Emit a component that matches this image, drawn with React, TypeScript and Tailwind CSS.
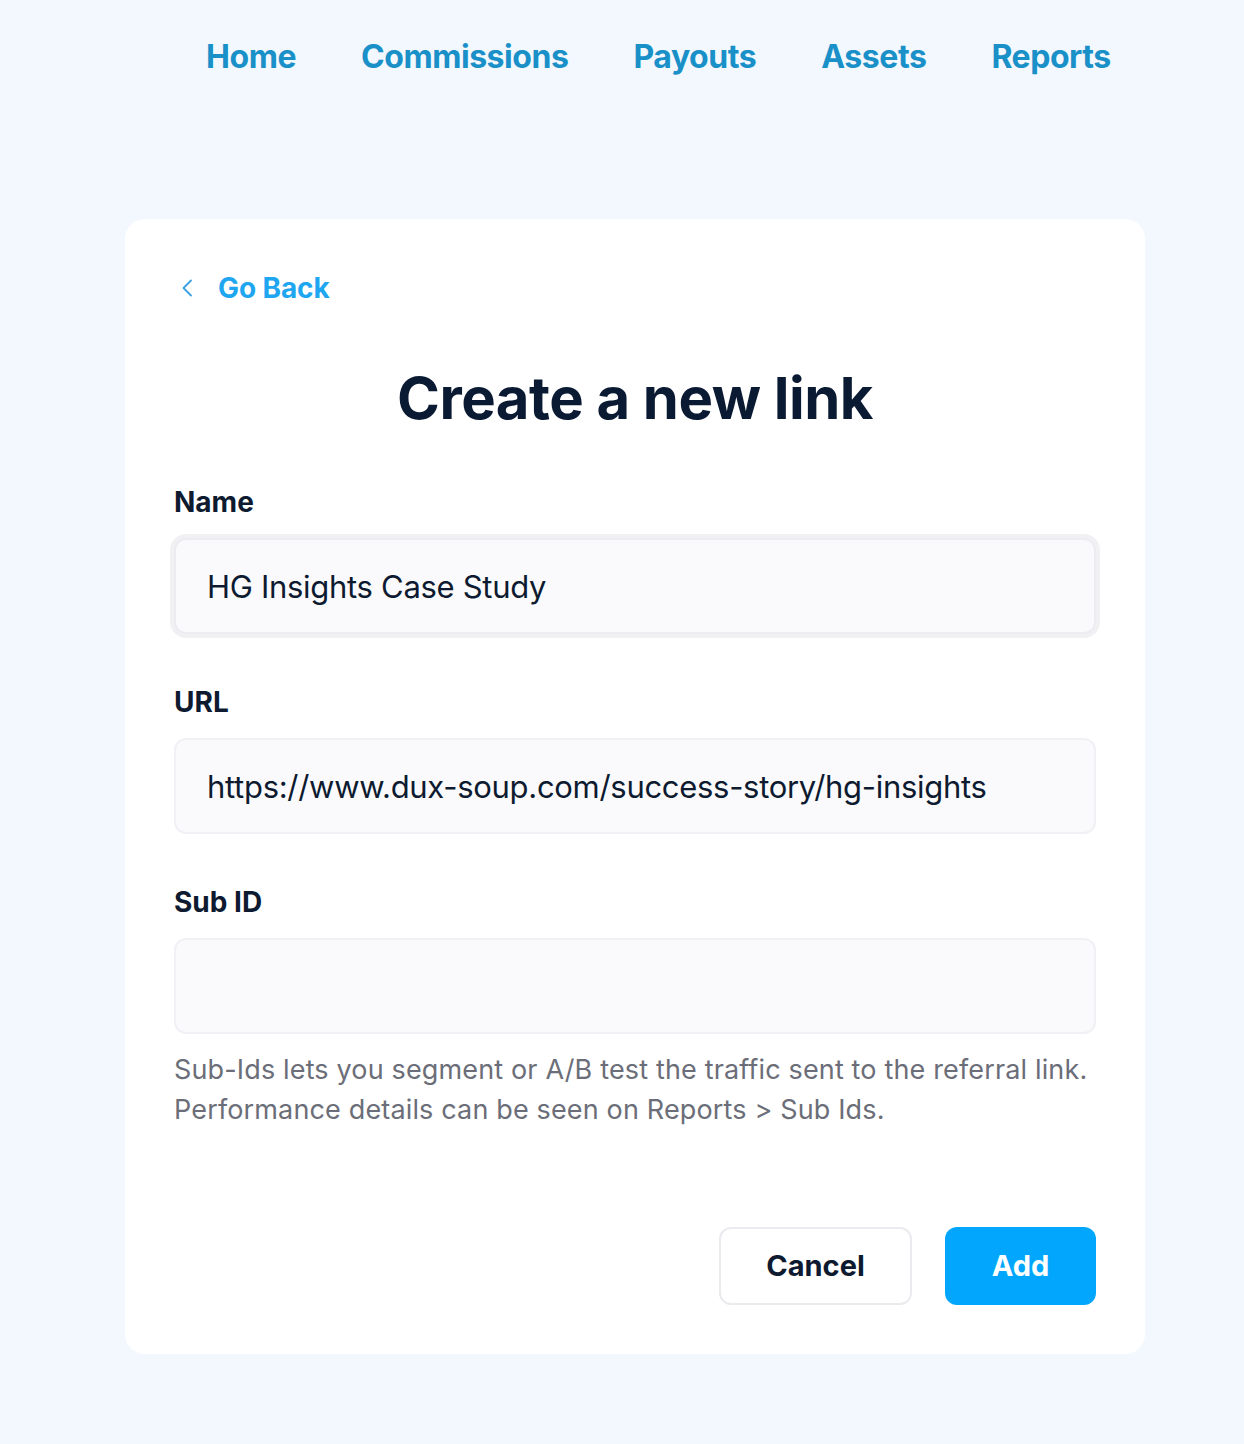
const navItems = ['Home', 'Commissions', 'Payouts', 'Assets', 'Reports']

function Field({
  label,
  value,
  focused,
}: {
  label: string
  value?: string
  focused?: boolean
}) {
  return (
    <div className="flex flex-col">
      <label className="text-[28px] leading-[36px] font-bold text-[#0d1a30]">{label}</label>
      <div
        className={
          focused
            ? 'mt-[18px] h-[96px] rounded-[12px] border-2 border-[#ececf1] bg-[#fafafc] ring-4 ring-[#f1f1f4] flex items-center px-[31px]'
            : 'mt-[18px] h-[96px] rounded-[12px] border-2 border-[#f1f1f5] bg-[#fafafc] flex items-center px-[31px]'
        }
      >
        <span className="text-[31px] tracking-[-0.3px] text-[#0d1a30] leading-none">{value}</span>
      </div>
    </div>
  )
}

export default function App() {
  return (
    <div
      className="min-h-[1444px] bg-[#f3f8fe] pb-[90px]"
      style={{ fontFamily: 'Inter, "Noto Sans", sans-serif' }}
    >
      <nav className="flex gap-[65px] ml-[206px] pt-[37px]">
        {navItems.map((item) => (
          <a key={item} className="text-[32px] leading-[40px] font-bold text-[#1a90c8] tracking-[-0.45px]">
            {item}
          </a>
        ))}
      </nav>

      <div className="ml-[125px] mt-[142px] w-[1020px] rounded-[20px] bg-white px-[49px] pt-[49px] pb-[49px]">
        <button className="flex items-center h-[40px]">
          <svg width="12" height="18" viewBox="0 0 12 18" className="ml-[7px]" fill="none">
            <path d="M10 1.5 2.5 9l7.5 7.5" stroke="#3b9fe0" strokeWidth="1.8" strokeLinecap="round" strokeLinejoin="round" />
          </svg>
          <span className="ml-[25px] text-[28px] font-bold text-[#1fa6f0] tracking-[-0.1px]">Go Back</span>
        </button>

        <h1 className="mt-[55px] text-center text-[58px] leading-[70px] font-bold text-[#0b1a33] tracking-[-0.5px]">
          Create a new link
        </h1>

        <div className="mt-[51px] flex flex-col gap-[50px]">
          <Field label="Name" value="HG Insights Case Study" focused />
          <Field label="URL" value="https://www.dux-soup.com/success-story/hg-insights" />
          <div>
            <Field label="Sub ID" />
            <p className="mt-[16px] text-[27px] leading-[40px] text-[#6b6e78] tracking-[0.15px]">
              Sub-Ids lets you segment or A/B test the traffic sent to the referral link.
              <br />
              Performance details can be seen on Reports &gt; Sub Ids.
            </p>
          </div>
        </div>

        <div className="mt-[97px] flex justify-end gap-[33px]">
          <button className="h-[78px] w-[193px] rounded-[12px] border-2 border-[#ebebef] bg-white text-[29px] font-bold text-[#0d1a30]">
            Cancel
          </button>
          <button className="h-[78px] w-[151px] rounded-[12px] bg-[#02a7fd] text-[29px] font-bold text-white">
            Add
          </button>
        </div>
      </div>
    </div>
  )
}
